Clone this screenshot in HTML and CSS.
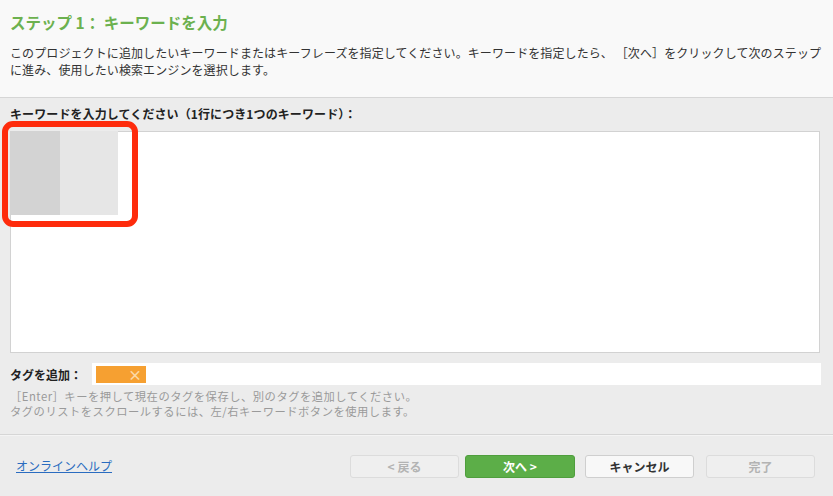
FILE: index.html
```html
<!DOCTYPE html>
<html lang="ja">
<head>
<meta charset="utf-8">
<link rel="stylesheet" href="styles.css">
</head>
<body>
<div class="page">
  <header class="header">
    <h1 class="title">ステップ 1： キーワードを入力</h1>
    <p class="desc">このプロジェクトに追加したいキーワードまたはキーフレーズを指定してください。キーワードを指定したら、 ［次へ］をクリックして次のステップ<br>に進み、使用したい検索エンジンを選択します。</p>
  </header>
  <main class="body">
    <div class="label">キーワードを入力してください（1行につき1つのキーワード）：</div>
    <div class="keywords">
      <div class="blocks">
        <div class="block dark"></div>
        <div class="block light"></div>
      </div>
      <div class="highlight"></div>
    </div>
    <div class="tagrow">
      <div class="taglabel">タグを追加：</div>
      <div class="taginput">
        <span class="tag"><span class="tagx">×</span></span>
      </div>
    </div>
    <div class="help">
      <div class="helpline">［Enter］キーを押して現在のタグを保存し、別のタグを追加してください。</div>
      <div class="helpline">タグのリストをスクロールするには、左/右キーワードボタンを使用します。</div>
    </div>
  </main>
  <footer class="footer">
    <a class="helplink" href="#">オンラインヘルプ</a>
    <div class="buttons">
      <button class="btn disabled back">&lt;&nbsp;戻る</button>
      <button class="btn primary next">次へ&nbsp;&gt;</button>
      <button class="btn cancel">キャンセル</button>
      <button class="btn disabled done">完了</button>
    </div>
  </footer>
</div>
</body>
</html>
```
FILE: styles.css
```css
* { box-sizing: border-box; }
html, body {
  margin: 0;
  padding: 0;
  width: 833px;
  height: 496px;
  overflow: hidden;
  background: #ececec;
  font-family: "Noto Sans CJK JP", "Noto Sans", sans-serif;
  color: #333;
}
.page {
  display: flex;
  flex-direction: column;
  height: 496px;
}
.header {
  background: #f9f9f9;
  height: 98px;
  border-bottom: 1px solid #d6d6d6;
  padding: 12px 10px 0 10px;
}
.title {
  margin: 0;
  font-size: 15.5px;
  line-height: 20px;
  font-weight: bold;
  color: #6cb14f;
}
.desc {
  margin: 12px 0 0 0;
  font-size: 12px;
  line-height: 17px;
  letter-spacing: 0.1px;
  color: #333;
}
.body {
  padding: 8px 12px 0 10px;
  height: 337px;
  border-bottom: 1px solid #d6d6d6;
}
.label {
  font-size: 12px;
  line-height: 16px;
  font-weight: bold;
  letter-spacing: 0.1px;
  color: #222;
}
.keywords {
  position: relative;
  margin-top: 9px;
  height: 222px;
  background: #fff;
  border: 1px solid #d2d2d2;
  margin-right: 1px;
}
.blocks {
  display: flex;
  margin: -1px 0 0 -1px;
}
.block { height: 84px; }
.block.dark { width: 50px; background: #d3d3d3; }
.block.light { width: 58px; background: #e6e6e6; }
.highlight {
  position: absolute;
  left: -9px;
  top: -11px;
  width: 136px;
  height: 106px;
  border: 6px solid #fe2b0c;
  border-radius: 11px;
}
.tagrow {
  display: flex;
  align-items: center;
  margin-top: 10px;
  height: 22px;
}
.taglabel {
  width: 82px;
  font-size: 12px;
  font-weight: bold;
  color: #222;
}
.taginput {
  flex: 1;
  height: 22px;
  background: #fff;
  display: flex;
  align-items: center;
  padding-left: 4px;
}
.tag {
  width: 50px;
  height: 17px;
  background: #f6a031;
  display: flex;
  align-items: center;
  justify-content: flex-end;
  padding-right: 4px;
}
.tagx {
  color: #fbd9a6;
  font-size: 14px;
  line-height: 14px;
  font-weight: bold;
}
.help {
  margin-top: 4px;
  color: #9a9a9a;
}
.helpline {
  font-size: 11.3px;
  line-height: 15px;
  height: 15px;
  letter-spacing: 0.5px;
}
.footer {
  flex: 1;
  display: flex;
  align-items: flex-start;
  padding: 19px 18px 0 16px;
  border-top: 1px solid #f4f4f4;
}
.helplink {
  font-size: 12px;
  line-height: 22px;
  color: #2a6cc0;
  text-decoration: underline;
}
.buttons {
  margin-left: auto;
  display: flex;
}
.btn {
  height: 23px;
  font-family: "Noto Sans CJK JP", "Noto Sans", sans-serif;
  font-size: 12px;
  font-weight: bold;
  border-radius: 3px;
  border: 1px solid #cfcfcf;
  background: #f8f8f8;
  color: #333;
  padding: 0;
  line-height: 20px;
}
.btn.back { width: 109px; }
.btn.next { width: 110px; margin-left: 6px; }
.btn.cancel { width: 109px; margin-left: 10px; }
.btn.done { width: 109px; margin-left: 12px; }
.btn.disabled {
  background: #efefef;
  border-color: #dcdcdc;
  color: #b3b3b3;
}
.btn.primary {
  background: #5cae48;
  border-color: #4f9e3d;
  color: #fff;
}
```
